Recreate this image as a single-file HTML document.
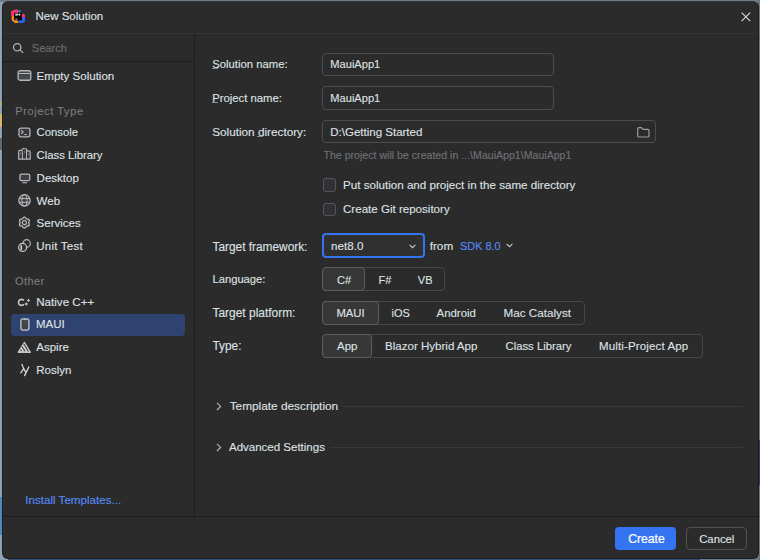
<!DOCTYPE html>
<html><head><meta charset="utf-8">
<style>
html,body{margin:0;padding:0;}
body{width:760px;height:560px;position:relative;overflow:hidden;background:#8ea2b2;font-family:"Liberation Sans",sans-serif;font-size:11.5px;color:#dfe1e5;}
#win{position:absolute;left:1.5px;top:1px;width:757.3px;height:557.6px;box-sizing:border-box;background:#2b2b2b;border:1px solid #1d1d1d;border-top-color:#333;border-radius:6px;}
.t{position:absolute;white-space:nowrap;line-height:12px;-webkit-text-stroke:0.12px currentColor;}
.l{position:absolute;}
svg{position:absolute;overflow:visible;}
.muted{color:#7a7c80;}
.box{position:absolute;box-sizing:border-box;border:1px solid #4b4d50;border-radius:4px;}
.seg{position:absolute;box-sizing:border-box;border:1px solid #45474a;border-radius:4px;}
.sel{position:absolute;box-sizing:border-box;border:1px solid #5c5e62;border-radius:4px;background:#373738;}
.u{text-decoration:underline;text-underline-offset:1px;text-decoration-thickness:1px;text-decoration-color:#8a8c90;}
</style></head><body>
<div class="l" style="left:0;top:0;width:760px;height:1.5px;background:#6f7d88"></div>
<div class="l" style="left:0;top:552px;width:760px;height:8px;background:#34507e"></div>
<div class="l" style="left:0;top:540px;width:8px;height:20px;background:#8ea2b2"></div>
<div class="l" style="left:700px;top:552px;width:60px;height:8px;background:#6d7d8a"></div>
<div class="l" style="left:0;top:103px;width:2px;height:1.5px;background:#cdb06a"></div>
<div class="l" style="left:0;top:114px;width:2px;height:13px;background:#d6b865"></div>
<div class="l" style="left:0;top:138px;width:2px;height:12px;background:#5d6870"></div>
<div class="l" style="left:0;top:496.5px;width:2px;height:38px;background:#4a88c4"></div>
<div class="l" style="left:757px;top:0;width:3px;height:560px;background:#6a7884"></div>
<div class="l" style="left:757px;top:440px;width:3px;height:45px;background:#2e4270"></div>
<div id="win"></div>

<!-- title bar -->
<svg style="left:11px;top:8.5px" width="15" height="15" viewBox="0 0 15 15">
  <path d="M0.4 2.2 L5.2 0.4 L7.5 1.6 L7.5 3.8 L3.3 3.8 L3.3 11 L6 11 L8 13.5 L4.5 14.3 L0.8 11.5 Z" fill="#ff8a1e"/>
  <path d="M0.4 2.2 L5.2 0.4 L7.5 1.6 L7.5 3.8 L3.3 3.8 L3.3 7 L0.5 7.5 Z" fill="#ff2f73"/>
  <path d="M8 11.2 L10.8 11.2 L10.8 9.4 L13.9 9.4 L13.9 13 L10 14.2 L7.5 13.4 Z" fill="#2168ff"/>
  <path d="M10.8 4.4 L13.9 5.2 L13.9 9.6 L10.8 9.6 Z" fill="#ff2f73"/>
  <path d="M10.8 8 L13.9 8.6 L13.9 10 L10.8 10 Z" fill="#3c5cff"/>
  <circle cx="8.6" cy="2.3" r="1.3" fill="#2f70ff"/>
  <rect x="3.3" y="3.8" width="7.5" height="7.4" fill="#000"/>
  <rect x="4.3" y="4.6" width="2.6" height="2" fill="#d6d6d6"/>
  <circle cx="8.4" cy="5.6" r="1.1" fill="#d6d6d6"/>
  <rect x="4.3" y="9.6" width="2.5" height="0.8" fill="#cfcfcf"/>
</svg>
<div class="t" style="left:35.5px;top:9.7px;font-size:11.5px">New Solution</div>
<svg style="left:740.5px;top:11.5px" width="10" height="10" viewBox="0 0 10 10"><path d="M0.6 0.6 L9.2 9.2 M9.2 0.6 L0.6 9.2" stroke="#d0d2d6" stroke-width="1.2"/></svg>
<div class="l" style="left:2px;top:33px;width:756px;height:1px;background:#333333"></div>

<!-- left panel -->
<div class="l" style="left:2px;top:61px;width:192px;height:1px;background:#1e1e1e"></div>
<div class="l" style="left:194px;top:34px;width:1px;height:482px;background:#1e1e1e"></div>
<div class="l" style="left:2px;top:516px;width:756px;height:1px;background:#1e1e1e"></div>

<svg style="left:13px;top:42.8px" width="11" height="11" viewBox="0 0 11 11"><circle cx="4.2" cy="4.2" r="3.7" fill="none" stroke="#b4b6b9" stroke-width="1.25"/><path d="M6.9 6.9 L10.2 9.9" stroke="#b4b6b9" stroke-width="1.25"/></svg>
<div class="t" style="left:31.8px;top:42px;font-size:11.1px;color:#6c6e72">Search</div>

<svg style="left:17px;top:70px" width="15" height="11" viewBox="0 0 15 11"><rect x="1.1" y="0.75" width="12.7" height="9.5" rx="2" fill="#46484b" stroke="#b4b6b9" stroke-width="1.3"/><path d="M1.6 3.5 H13.3" stroke="#b4b6b9" stroke-width="1"/></svg>
<div class="t" style="left:36.6px;top:70px;font-size:11.55px">Empty Solution</div>

<div class="t muted" style="left:15.3px;top:105.2px;font-size:11px;letter-spacing:0.62px">Project Type</div>

<svg style="left:18px;top:126.5px" width="13" height="11" viewBox="0 0 13 11"><rect x="0.95" y="1.15" width="11" height="8.7" rx="2" fill="#35373a" stroke="#b4b6b9" stroke-width="1.3"/><path d="M3.2 3.3 L5.1 5.1 L3.2 6.9" fill="none" stroke="#b4b6b9" stroke-width="1.2"/><path d="M6.2 7.6 H9" stroke="#b4b6b9" stroke-width="1"/></svg>
<div class="t" style="left:36.6px;top:126.4px;font-size:11.3px">Console</div>

<svg style="left:18px;top:148px" width="13" height="12" viewBox="0 0 13 12"><path d="M0.7 11.2 V3.5 Q0.7 2.3 2 2.3 H3 Q4.2 2.3 4.2 1.3 Q4.3 0.5 6.4 0.5 Q8.6 0.5 8.6 1.8 V2.8 H10.5 Q12.2 2.8 12.2 4.3 V11.2 Z" fill="#35373a" stroke="#b4b6b9" stroke-width="1.2"/><path d="M4.4 3 V11 M8.5 3 V11" stroke="#b4b6b9" stroke-width="1"/><path d="M2.5 5 V6 M6.5 3.5 V4.5 M10.3 5.5 V6.5" stroke="#b4b6b9" stroke-width="0.9"/></svg>
<div class="t" style="left:36.6px;top:149.4px;font-size:11.3px">Class Library</div>

<svg style="left:18.5px;top:172.5px" width="12" height="11" viewBox="0 0 12 11"><rect x="0.95" y="1.05" width="9.8" height="6.6" rx="1.5" fill="#3d3f42" stroke="#b4b6b9" stroke-width="1.3"/><path d="M3.5 9.75 H8" stroke="#b4b6b9" stroke-width="1.1"/></svg>
<div class="t" style="left:36.6px;top:172px">Desktop</div>

<svg style="left:17.8px;top:193.6px" width="13" height="13" viewBox="0 0 13 13"><circle cx="6.5" cy="6.4" r="5.7" fill="#3a3c3f" stroke="#b8babd" stroke-width="1.2"/><ellipse cx="6.5" cy="6.4" rx="2.6" ry="5.6" fill="none" stroke="#b8babd" stroke-width="1"/><path d="M1 4.6 H12 M1 8.3 H12" stroke="#b8babd" stroke-width="1"/></svg>
<div class="t" style="left:36.6px;top:194.8px">Web</div>

<svg style="left:18px;top:216px" width="13" height="13" viewBox="0 0 13 13"><path d="M6.40 1.00 L7.69 1.77 L8.50 2.96 L9.94 3.06 L11.25 3.80 L11.23 5.31 L10.60 6.60 L11.23 7.89 L11.25 9.40 L9.94 10.14 L8.50 10.24 L7.69 11.43 L6.40 12.20 L5.11 11.43 L4.30 10.24 L2.86 10.14 L1.55 9.40 L1.57 7.89 L2.20 6.60 L1.57 5.31 L1.55 3.80 L2.86 3.06 L4.30 2.96 L5.11 1.77 Z" fill="#3a3c3f" stroke="#b8babd" stroke-width="1.25" stroke-linejoin="round"/><circle cx="6.4" cy="6.6" r="2" fill="#2b2b2b" stroke="#b8babd" stroke-width="1.1"/></svg>
<div class="t" style="left:36.6px;top:217.3px">Services</div>

<svg style="left:17.8px;top:238.8px" width="13" height="13" viewBox="0 0 13 13"><circle cx="8.6" cy="4.5" r="3.8" fill="#2d2f31" stroke="#b4b6b9" stroke-width="1.2"/><circle cx="4.6" cy="8.4" r="4" fill="#2f3133" stroke="#c2c4c7" stroke-width="1.2"/><path d="M3.3 6.2 V10.7" stroke="#e0e0e0" stroke-width="1.4"/></svg>
<div class="t" style="left:36.3px;top:240px;font-size:11.5px;letter-spacing:0.22px">Unit Test</div>

<div class="t muted" style="left:15px;top:275.2px;font-size:11px;letter-spacing:0.4px">Other</div>

<svg style="left:17px;top:297px" width="14" height="10" viewBox="0 0 14 10"><path d="M6.9 3.6 A3 3 0 1 0 6.9 7.2" fill="none" stroke="#c8cacd" stroke-width="1.6"/><path d="M11.5 1.5 L12.2 2.7 L13.4 3.4 L12.2 4.1 L11.5 5.3 L10.8 4.1 L9.6 3.4 L10.8 2.7 Z M9.3 5.1 L10 6.3 L11.2 7 L10 7.7 L9.3 8.9 L8.6 7.7 L7.4 7 L8.6 6.3 Z" fill="#c8cacd"/></svg>
<div class="t" style="left:36.25px;top:296.3px;font-size:11.6px">Native C++</div>

<div class="l" style="left:10.5px;top:313.75px;width:174.5px;height:22.5px;background:#2e4370;border-radius:4px"></div>
<svg style="left:19.5px;top:318px" width="10" height="13" viewBox="0 0 10 13"><rect x="0.9" y="0.8" width="8" height="11.3" rx="2" fill="#424448" stroke="#c0c8d4" stroke-width="1.3"/><path d="M3.3 1.6 H6.5" stroke="#c0c8d4" stroke-width="0.9"/></svg>
<div class="t" style="left:36px;top:317.9px;font-size:11.5px">MAUI</div>

<svg style="left:17px;top:341px" width="15" height="13" viewBox="0 0 15 13"><path d="M7.4 1.3 L13.4 11.3 H1.2 Z" fill="#c4c6c9" stroke="#c4c6c9" stroke-width="1.2" stroke-linejoin="round"/><path d="M7 3.2 L11.2 10.2 M5.2 5.9 L7.7 9.9 M3.9 9.1 L4.3 9.7" stroke="#2b2b2b" stroke-width="1" stroke-linecap="round"/></svg>
<div class="t" style="left:36.3px;top:340.8px">Aspire</div>

<svg style="left:19.8px;top:363.8px" width="10" height="12" viewBox="0 0 10 12"><path d="M1.9 0.5 L3.7 4.6 L0.8 8.9 M3.7 4.6 L5.6 8 M8.8 3 L4.6 11.6" fill="none" stroke="#d4d6d9" stroke-width="1.3" stroke-linecap="round"/></svg>
<div class="t" style="left:36.3px;top:363.8px">Roslyn</div>

<div class="t" style="left:25.3px;top:494.4px;color:#548af7;font-size:11.6px">Install Templates...</div>

<!-- right form -->
<div class="t" style="left:212.2px;top:58.2px;font-size:11.3px">Solution name:</div>
<div class="t" style="left:212.2px;top:92px;font-size:11.3px">Project name:</div>
<div class="t" style="left:212.2px;top:125.8px;font-size:11.75px">Solution directory:</div>

<div class="l" style="left:212.3px;top:68.3px;width:6.2px;height:1px;background:#8a8c90"></div>
<div class="l" style="left:212.3px;top:102.2px;width:6.2px;height:1px;background:#8a8c90"></div>
<div class="l" style="left:257.2px;top:136.2px;width:5.6px;height:1px;background:#8a8c90"></div>
<div class="box" style="left:322px;top:52.5px;width:232px;height:23.3px"></div>
<div class="t" style="left:330.3px;top:58.4px;font-size:11.1px">MauiApp1</div>
<div class="box" style="left:322px;top:86.3px;width:232px;height:23.3px"></div>
<div class="t" style="left:330.3px;top:92px;font-size:11.1px">MauiApp1</div>
<div class="box" style="left:322px;top:119.8px;width:334px;height:23.3px"></div>
<div class="t" style="left:330.3px;top:126px;font-size:11.5px">D:\Getting Started</div>
<svg style="left:637px;top:126.8px" width="13" height="11" viewBox="0 0 13 11"><path d="M0.7 2 Q0.7 0.7 2 0.7 H4.4 L6 2.3 H10.8 Q12 2.3 12 3.5 V8.9 Q12 10 10.8 10 H2 Q0.7 10 0.7 8.9 Z" fill="none" stroke="#9a9c9f" stroke-width="1.2"/></svg>
<div class="t" style="left:323.5px;top:148.8px;color:#6f7276;font-size:10.6px">The project will be created in ...\MauiApp1\MauiApp1</div>

<div class="l" style="left:322.5px;top:178.2px;width:13.5px;height:13.5px;box-sizing:border-box;border:1px solid #55575b;border-radius:3px;background:#2f3134"></div>
<div class="t" style="left:343px;top:179.2px;font-size:11.62px">Put solution and project in the same directory</div>
<div class="l" style="left:322.5px;top:202.7px;width:13.5px;height:13.5px;box-sizing:border-box;border:1px solid #55575b;border-radius:3px;background:#2f3134"></div>
<div class="t" style="left:343px;top:203.4px;font-size:11.57px">Create Git repository</div>

<div class="t" style="left:212.5px;top:241px;font-size:11.87px">Target framework:</div>
<div class="l" style="left:322px;top:233px;width:103px;height:25px;box-sizing:border-box;border:2px solid #3574f0;border-radius:4px;background:#303030"></div>
<div class="t" style="left:331px;top:240.4px;font-size:11.65px">net8.0</div>
<svg style="left:409px;top:244px" width="7" height="5" viewBox="0 0 7 5"><path d="M0.6 0.8 L3.5 3.7 L6.4 0.8" fill="none" stroke="#c8cacd" stroke-width="1.1"/></svg>
<div class="t" style="left:429.7px;top:240.4px;font-size:11.75px">from</div>
<div class="t" style="left:460px;top:240.4px;color:#548af7;font-size:10.9px">SDK 8.0</div>
<svg style="left:505.5px;top:242.5px" width="7" height="5" viewBox="0 0 7 5"><path d="M0.6 0.8 L3.5 3.7 L6.4 0.8" fill="none" stroke="#c8cacd" stroke-width="1.1"/></svg>

<div class="t" style="left:212.5px;top:273.2px;font-size:11.2px">Language:</div>
<div class="seg" style="left:322.2px;top:267.3px;width:123.2px;height:23.5px"></div>
<div class="sel" style="left:322.2px;top:267.3px;width:43.1px;height:23.5px"></div>
<div class="t" style="left:337px;top:273.9px;font-size:11px">C#</div>
<div class="t" style="left:378.5px;top:273.9px;font-size:11px">F#</div>
<div class="t" style="left:417.8px;top:273.9px;font-size:11px">VB</div>

<div class="t" style="left:212.5px;top:307px;font-size:11.95px">Target platform:</div>
<div class="seg" style="left:322.4px;top:301.2px;width:262.4px;height:23.6px"></div>
<div class="sel" style="left:322.4px;top:301.2px;width:57px;height:23.6px"></div>
<div class="t" style="left:336.4px;top:307.1px;font-size:11.3px">MAUI</div>
<div class="t" style="left:391.6px;top:307.1px;font-size:11px">iOS</div>
<div class="t" style="left:436.6px;top:307.1px;font-size:11.4px">Android</div>
<div class="t" style="left:503.6px;top:307.1px;font-size:11.66px">Mac Catalyst</div>

<div class="t" style="left:212.5px;top:340px;font-size:11.86px">Type:</div>
<div class="seg" style="left:322.4px;top:334.4px;width:380.5px;height:23.6px"></div>
<div class="sel" style="left:322.4px;top:334.4px;width:50px;height:23.6px"></div>
<div class="t" style="left:337px;top:340.4px;font-size:11.47px">App</div>
<div class="t" style="left:385px;top:340.4px;font-size:11.56px">Blazor Hybrid App</div>
<div class="t" style="left:505.5px;top:340.4px;font-size:11.3px">Class Library</div>
<div class="t" style="left:599px;top:340.4px;font-size:11.5px;letter-spacing:0.14px">Multi-Project App</div>

<svg style="left:215.5px;top:401.5px" width="6" height="9" viewBox="0 0 6 9"><path d="M1 0.8 L4.6 4.4 L1 8" fill="none" stroke="#b8babd" stroke-width="1.1"/></svg>
<div class="t" style="left:229.7px;top:400.1px;font-size:11.83px">Template description</div>
<div class="l" style="left:343px;top:406px;width:399.5px;height:1px;background:#393939"></div>
<svg style="left:215.5px;top:442.5px" width="6" height="9" viewBox="0 0 6 9"><path d="M1 0.8 L4.6 4.4 L1 8" fill="none" stroke="#b8babd" stroke-width="1.1"/></svg>
<div class="t" style="left:229px;top:441.2px;font-size:11.51px">Advanced Settings</div>
<div class="l" style="left:330px;top:447px;width:412.5px;height:1px;background:#393939"></div>

<!-- buttons -->
<div class="l" style="left:615.2px;top:526.6px;width:61px;height:23.5px;background:#3574f0;border-radius:4px"></div>
<div class="t" style="left:628.2px;top:533.1px;color:#fff;font-size:12.2px;-webkit-text-stroke:0.22px #fff">Create</div>
<div class="box" style="left:686.2px;top:526.6px;width:60.8px;height:23.5px;border-color:#505256"></div>
<div class="t" style="left:699.2px;top:533.1px;font-size:11.3px">Cancel</div>
</body></html>
